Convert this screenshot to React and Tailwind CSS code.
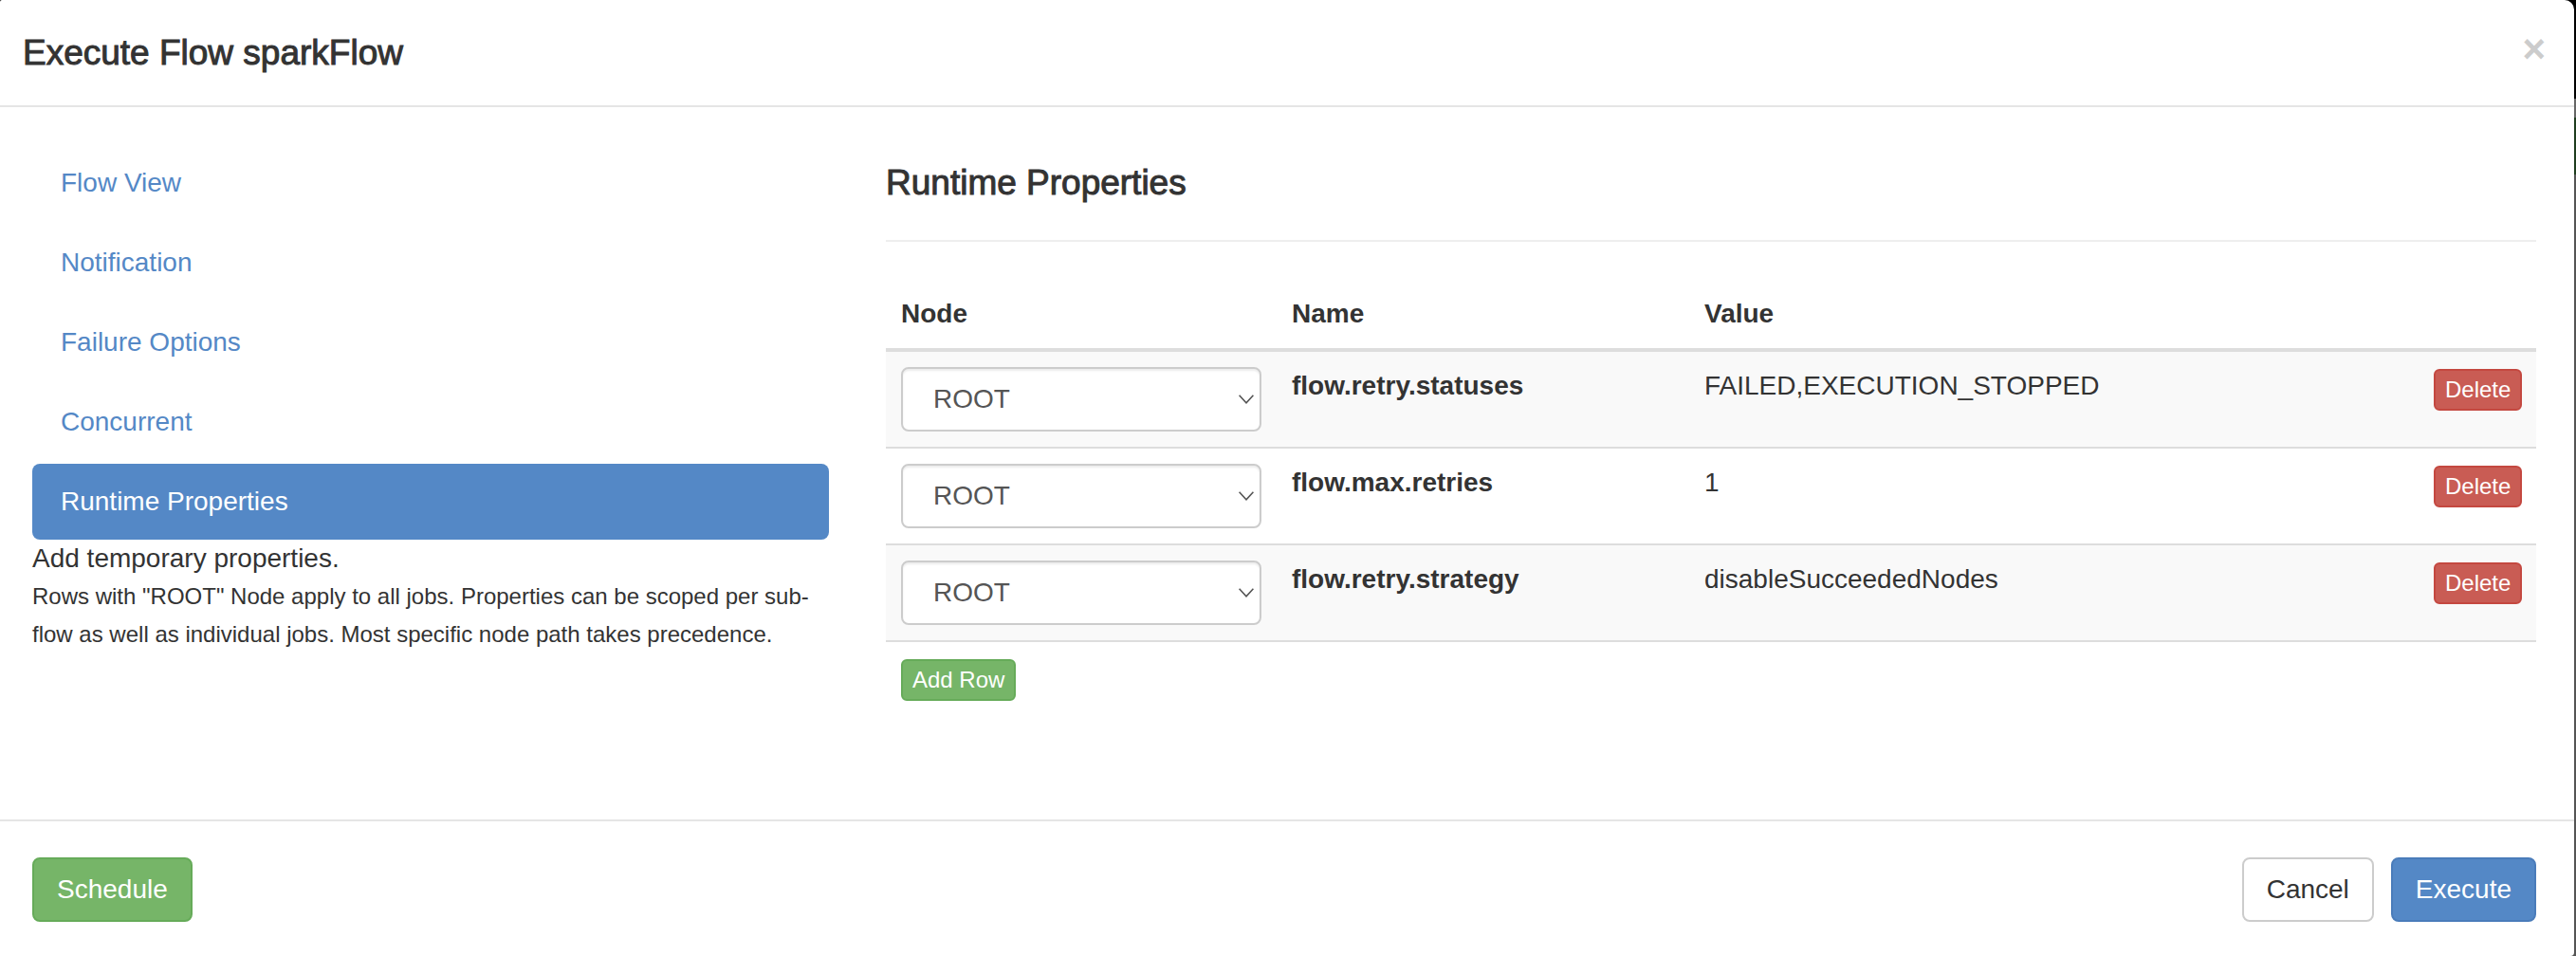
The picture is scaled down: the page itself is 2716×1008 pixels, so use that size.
import React from "react";

const tabs = ["Flow View", "Notification", "Failure Options", "Concurrent", "Runtime Properties"];

const properties = [
  { name: "flow.retry.statuses", value: "FAILED,EXECUTION_STOPPED" },
  { name: "flow.max.retries", value: "1" },
  { name: "flow.retry.strategy", value: "disableSucceededNodes" },
];

const heading = "text-[37px] leading-[51px] [-webkit-text-stroke:1px_#333]";
const button = "rounded-lg border-2 px-6 py-3 text-[28px] leading-[40px]";
const smallButton = "block rounded-md border-2 px-[10px] py-[2px] text-2xl leading-[36px] text-white";

function Header() {
  return (
    <header className="flex items-start justify-between border-b-2 border-[#e5e5e5] py-[30px] pr-[30px] pl-6">
      <h4 className={heading}>Execute Flow sparkFlow</h4>
      <button type="button" aria-label="Close" className="text-[42px] leading-[44px] font-bold text-[#ccc]">
        ×
      </button>
    </header>
  );
}

function Sidebar() {
  return (
    <div className="w-1/3 px-[30px]">
      <nav className="flex flex-col gap-1">
        {tabs.map((tab) => (
          <a
            key={tab}
            href="#"
            className={
              tab === "Runtime Properties"
                ? "rounded-lg bg-[#5488c6] px-[30px] py-5 text-white"
                : "rounded-lg px-[30px] py-5 text-[#5488c6]"
            }
          >
            {tab}
          </a>
        ))}
      </nav>
      <p>Add temporary properties.</p>
      <p className="text-2xl leading-[40px]">
        Rows with "ROOT" Node apply to all jobs. Properties can be scoped per sub-flow as well as individual jobs.
        Most specific node path takes precedence.
      </p>
    </div>
  );
}

function NodeSelect({ label }) {
  return (
    <div className="relative">
      <select
        aria-label={label}
        className="block h-[68px] w-full appearance-none rounded-lg border-2 border-[#ccc] bg-white px-8 py-3 text-[28px] leading-[40px] text-[#555] shadow-[inset_0_2px_2px_rgba(0,0,0,0.075)]"
      >
        <option>ROOT</option>
      </select>
      <svg
        viewBox="0 0 16 10"
        className="pointer-events-none absolute top-[29px] right-2 h-[10px] w-4"
        fill="none"
        stroke="#555"
        strokeWidth="1.6"
      >
        <path d="M0.6 0.8 8 8.8 15.4 0.8" />
      </svg>
    </div>
  );
}

function PropertiesPanel() {
  return (
    <div className="w-2/3 px-[30px]">
      <h4 className={`${heading} border-b-2 border-[#eee] pt-[14px] pb-[35px]`}>Runtime Properties</h4>
      <table className="mt-10 w-full table-fixed border-collapse">
        <thead>
          <tr className="border-b-4 border-[#ddd] text-left">
            <th className="w-[412px] p-4">Node</th>
            <th className="w-1/4 p-4">Name</th>
            <th className="p-4">Value</th>
            <th className="w-[124px] p-4" />
          </tr>
        </thead>
        <tbody>
          {properties.map(({ name, value }) => (
            <tr key={name} className="border-b-2 border-[#ddd] align-top odd:bg-[#f9f9f9]">
              <td className="p-4">
                <NodeSelect label={`Node for ${name}`} />
              </td>
              <td className="p-4 font-bold">{name}</td>
              <td className="p-4">{value}</td>
              <td className="px-4 pt-[18px]">
                <button type="button" className={`${smallButton} border-[#c44840] bg-[#c95c54]`}>
                  Delete
                </button>
              </td>
            </tr>
          ))}
          <tr>
            <td colSpan={4} className="px-4 pt-[18px]">
              <button type="button" className={`${smallButton} border-[#66ab59] bg-[#76b568]`}>
                Add Row
              </button>
            </td>
          </tr>
        </tbody>
      </table>
    </div>
  );
}

function Footer() {
  return (
    <footer className="mt-auto flex items-center justify-between border-t-2 border-[#e5e5e5] pt-[38px] pr-10 pb-9 pl-[34px]">
      <button type="button" className={`${button} border-[#66ab59] bg-[#76b568] text-white`}>
        Schedule
      </button>
      <div className="flex gap-[18px]">
        <button type="button" className={`${button} border-[#ccc] bg-white`}>
          Cancel
        </button>
        <button type="button" className={`${button} border-[#4a7cba] bg-[#5488c6] text-white`}>
          Execute
        </button>
      </div>
    </footer>
  );
}

export default function App() {
  return (
    <div className="min-h-screen bg-[linear-gradient(#000_104px,#666_104px,#666_124px,#1f3d1f_124px,#1f3d1f_184px,#555_184px)] pr-[2px] font-['Liberation_Sans',Arial,sans-serif] text-[28px] leading-[40px] text-[#333]">
      <div
        role="dialog"
        aria-label="Execute Flow"
        className="flex min-h-screen flex-col rounded-tl-[2px] rounded-tr-[10px] rounded-br-[4px] bg-white"
      >
        <Header />
        <main className="flex pt-10 pr-[10px] pb-10 pl-1">
          <Sidebar />
          <PropertiesPanel />
        </main>
        <Footer />
      </div>
    </div>
  );
}
